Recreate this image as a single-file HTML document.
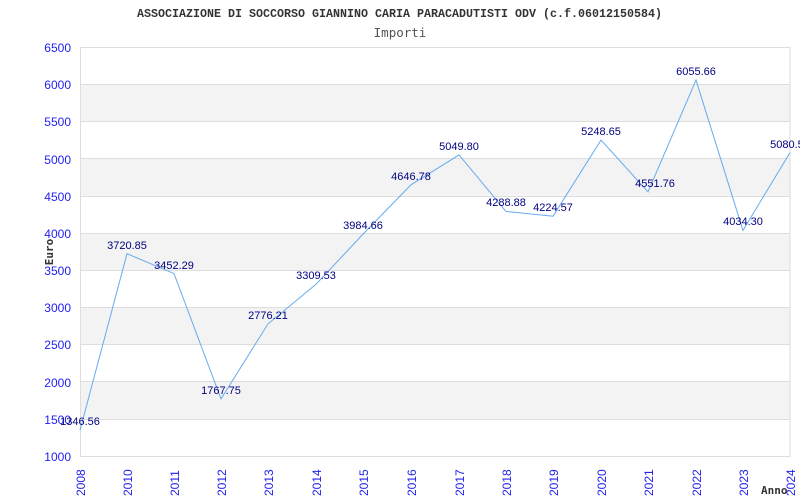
<!DOCTYPE html>
<html><head><style>body{margin:0;background:#fff}svg{display:block}</style></head><body>
<svg width="800" height="500" xmlns="http://www.w3.org/2000/svg">
<rect width="800" height="500" fill="#fff"/>
<text x="137" y="17" textLength="525" lengthAdjust="spacingAndGlyphs" font-family="Liberation Mono, monospace" font-weight="bold" font-size="11.5" fill="#333">ASSOCIAZIONE DI SOCCORSO GIANNINO CARIA PARACADUTISTI ODV (c.f.06012150584)</text>
<text x="400" y="37" text-anchor="middle" font-family="DejaVu Sans Mono, monospace" font-size="12.5" fill="#555">Importi</text>
<g fill="#f3f3f3">
<rect x="80" y="84.2" width="710" height="37.2"/>
<rect x="80" y="158.6" width="710" height="37.2"/>
<rect x="80" y="232.9" width="710" height="37.2"/>
<rect x="80" y="307.3" width="710" height="37.2"/>
<rect x="80" y="381.6" width="710" height="37.2"/>
</g>
<g stroke="#ddd" stroke-width="1">
<line x1="80" x2="790" y1="84.5" y2="84.5"/><line x1="80" x2="790" y1="121.5" y2="121.5"/>
<line x1="80" x2="790" y1="158.5" y2="158.5"/><line x1="80" x2="790" y1="196.5" y2="196.5"/>
<line x1="80" x2="790" y1="233.5" y2="233.5"/><line x1="80" x2="790" y1="270.5" y2="270.5"/>
<line x1="80" x2="790" y1="307.5" y2="307.5"/><line x1="80" x2="790" y1="344.5" y2="344.5"/>
<line x1="80" x2="790" y1="381.5" y2="381.5"/><line x1="80" x2="790" y1="419.5" y2="419.5"/>
</g>
<rect x="80.5" y="47.5" width="709.5" height="409" fill="none" stroke="#ddd"/>
<g font-family="Liberation Sans, sans-serif" font-size="12" fill="#2222ee" text-anchor="end">
<text x="71" y="52">6500</text><text x="71" y="89">6000</text><text x="71" y="126">5500</text>
<text x="71" y="164">5000</text><text x="71" y="201">4500</text><text x="71" y="238">4000</text>
<text x="71" y="275">3500</text><text x="71" y="312">3000</text><text x="71" y="349">2500</text>
<text x="71" y="387">2000</text><text x="71" y="424">1500</text><text x="71" y="461">1000</text>
</g>
<text transform="translate(53,252) rotate(-90)" text-anchor="middle" font-family="DejaVu Sans Mono, monospace" font-weight="bold" font-size="11" fill="#333">Euro</text>
<g font-family="Liberation Sans, sans-serif" font-size="12" fill="#2222ee">
<text transform="translate(85,496) rotate(-90)">2008</text>
<text transform="translate(132,496) rotate(-90)">2010</text>
<text transform="translate(179,496) rotate(-90)">2011</text>
<text transform="translate(226,496) rotate(-90)">2012</text>
<text transform="translate(273,496) rotate(-90)">2013</text>
<text transform="translate(321,496) rotate(-90)">2014</text>
<text transform="translate(368,496) rotate(-90)">2015</text>
<text transform="translate(416,496) rotate(-90)">2016</text>
<text transform="translate(464,496) rotate(-90)">2017</text>
<text transform="translate(511,496) rotate(-90)">2018</text>
<text transform="translate(558,496) rotate(-90)">2019</text>
<text transform="translate(606,496) rotate(-90)">2020</text>
<text transform="translate(653,496) rotate(-90)">2021</text>
<text transform="translate(701,496) rotate(-90)">2022</text>
<text transform="translate(748,496) rotate(-90)">2023</text>
<text transform="translate(795,496) rotate(-90)">2024</text>
</g>
<text x="761" y="494" font-family="DejaVu Sans Mono, monospace" font-weight="bold" font-size="11" fill="#333">Anno</text>
<polyline fill="none" stroke="#66aaee" stroke-width="1" points="80,430.2 127,253.7 174,273.6 221,398.9 268,323.9 316,284.3 363,234.1 411,184.8 459,154.9 506,211.4 553,216.2 601,140.1 648,191.9 696,80.1 743,230.4 790,152.6"/>
<g font-family="Liberation Sans, sans-serif" font-size="11" fill="#000080" text-anchor="middle">
<text x="80" y="425">1346.56</text><text x="127" y="249">3720.85</text><text x="174" y="269">3452.29</text>
<text x="221" y="394">1767.75</text><text x="268" y="319">2776.21</text><text x="316" y="279">3309.53</text>
<text x="363" y="229">3984.66</text><text x="411" y="180">4646.78</text><text x="459" y="150">5049.80</text>
<text x="506" y="206">4288.88</text><text x="553" y="211">4224.57</text><text x="601" y="135">5248.65</text>
<text x="655" y="187">4551.76</text><text x="696" y="75">6055.66</text><text x="743" y="225">4034.30</text>
<text x="790" y="148">5080.50</text>
</g>
</svg>
</body></html>
